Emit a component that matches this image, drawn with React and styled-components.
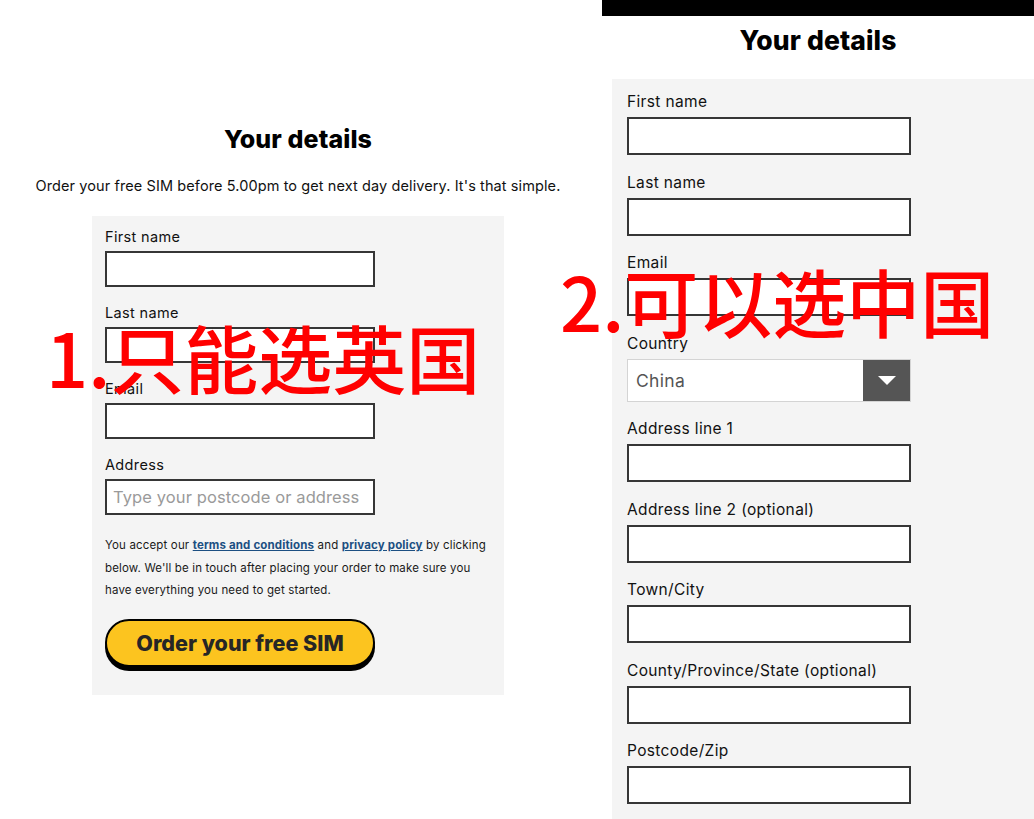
import React from 'react';
import styled, { createGlobalStyle } from 'styled-components';

const GlobalStyle = createGlobalStyle`
  html, body {
    margin: 0;
    padding: 0;
    background: #fff;
  }
  body {
    font-family: Inter, "Open Sans", Arial, sans-serif;
    color: #111;
  }
`;

const Page = styled.div`
  position: relative;
  width: 1034px;
  height: 819px;
  overflow: hidden;
  display: flex;
  align-items: stretch;
`;

// left screenshot: the UK-only checkout
const LeftShot = styled.section`
  width: 596px;
  display: flex;
  flex-direction: column;
  align-items: center;
  padding-top: 124px;
`;

const Heading = styled.h2`
  margin: 0;
  font-size: ${props => props.$size || 25}px;
  line-height: 30px;
  font-weight: 800;
  letter-spacing: 0.1px;
  color: #000;
`;

const Intro = styled.p`
  margin: 22px 0 0;
  font-size: 14.5px;
  line-height: 20px;
  letter-spacing: 0.1px;
  color: #111;
`;

const FormBox = styled.div`
  box-sizing: border-box;
  width: 412px;
  margin-top: 20px;
  padding: 11px 13px 28px;
  background: #f4f4f4;
`;

const Field = styled.div`
  margin-bottom: ${props => props.$gap ?? 16}px;
`;

const Label = styled.label`
  display: block;
  font-size: ${props => props.$size || 14.5}px;
  line-height: 20px;
  letter-spacing: 0.35px;
  color: #111;
  margin-bottom: ${props => props.$space || 4}px;
`;

const Input = styled.input`
  display: block;
  box-sizing: border-box;
  width: ${props => props.$w || 270}px;
  height: ${props => props.$h || 36}px;
  margin: 0;
  padding: 0 6px;
  border: 2px solid #363636;
  border-radius: 0;
  background: #fff;
  font-family: inherit;
  font-size: 16.5px;
  letter-spacing: 0.1px;
  color: #111;
  outline: none;

  &::placeholder {
    color: #9a9a9a;
  }
`;

const Terms = styled.p`
  margin: 19px 0 0;
  font-size: 11.5px;
  line-height: 22.5px;
  letter-spacing: 0.15px;
  color: #1a1a1a;
`;

const TermsLink = styled.a`
  color: #1c4f82;
  font-weight: 700;
  text-decoration: underline;
`;

const OrderButton = styled.button`
  display: block;
  box-sizing: border-box;
  width: 270px;
  height: 48px;
  margin-top: 17px;
  border: 2px solid #000;
  border-radius: 24px;
  background: #fcc41f;
  box-shadow: 0 4px 0 #000;
  font-family: inherit;
  font-size: 21.5px;
  font-weight: 800;
  letter-spacing: 0;
  color: #262626;
  cursor: pointer;
`;

// right screenshot: the international checkout
const RightShot = styled.section`
  flex: 1;
  margin-left: 6px;
  display: flex;
  flex-direction: column;
  min-height: 0;

  & > * {
    flex-shrink: 0;
  }
`;

const TopBar = styled.div`
  height: 16px;
  background: #000;
`;

const RightHeader = styled.div`
  display: flex;
  justify-content: center;
  padding: 9px 0 24px;
`;

const RightForm = styled.div`
  flex: 1 0 auto;
  margin-left: 10px;
  padding: 13px 15px 0;
  background: #f4f4f4;
`;

const Select = styled.div`
  box-sizing: border-box;
  display: flex;
  align-items: stretch;
  width: 284px;
  height: 43px;
  border: 1px solid #d4d4d4;
  background: #fff;
`;

const SelectValue = styled.span`
  flex: 1;
  display: flex;
  align-items: center;
  padding-left: 8px;
  font-size: 17.5px;
  letter-spacing: 0.3px;
  color: #555;
`;

const SelectCaret = styled.span`
  width: 47px;
  display: flex;
  align-items: center;
  justify-content: center;
  background: #555;

  &::after {
    content: '';
    border-left: 9px solid transparent;
    border-right: 9px solid transparent;
    border-top: 9px solid #fff;
  }
`;

// red annotation text pasted over the screenshots
const Note = styled.div`
  position: absolute;
  left: ${props => props.$x}px;
  top: ${props => props.$y}px;
  font-family: "Noto Sans CJK SC", sans-serif;
  font-size: 74px;
  line-height: 1;
  font-weight: 500;
  color: #ff0000;
  white-space: nowrap;
  pointer-events: none;
`;

const rightFields = [
  { label: 'First name' },
  { label: 'Last name' },
  { label: 'Email' },
  { label: 'Country', select: 'China' },
  { label: 'Address line 1' },
  { label: 'Address line 2 (optional)' },
  { label: 'Town/City' },
  { label: 'County/Province/State (optional)' },
  { label: 'Postcode/Zip' },
];

const App = () => (
  <Page>
    <GlobalStyle />
    <LeftShot>
      <Heading>Your details</Heading>
      <Intro>Order your free SIM before 5.00pm to get next day delivery. It's that simple.</Intro>
      <FormBox>
        <Field>
          <Label>First name</Label>
          <Input />
        </Field>
        <Field>
          <Label>Last name</Label>
          <Input />
        </Field>
        <Field>
          <Label>Email</Label>
          <Input />
        </Field>
        <Field>
          <Label>Address</Label>
          <Input placeholder="Type your postcode or address" />
        </Field>
        <Terms>
          You accept our <TermsLink href="#">terms and conditions</TermsLink> and{' '}
          <TermsLink href="#">privacy policy</TermsLink> by clicking below. We'll be in touch after
          placing your order to make sure you have everything you need to get started.
        </Terms>
        <OrderButton>Order your free SIM</OrderButton>
      </FormBox>
    </LeftShot>

    <RightShot>
      <TopBar />
      <RightHeader>
        <Heading $size={26.5}>Your details</Heading>
      </RightHeader>
      <RightForm>
        {rightFields.map(field => (
          <Field key={field.label} $gap={17.5}>
            <Label $size={15.5} $space={5}>{field.label}</Label>
            {field.select ? (
              <Select>
                <SelectValue>{field.select}</SelectValue>
                <SelectCaret />
              </Select>
            ) : (
              <Input $w={284} $h={38} />
            )}
          </Field>
        ))}
      </RightForm>
    </RightShot>

    <Note $x={46} $y={319}>1.只能选英国</Note>
    <Note $x={560} $y={263}>2.可以选中国</Note>
  </Page>
);

export default App;
